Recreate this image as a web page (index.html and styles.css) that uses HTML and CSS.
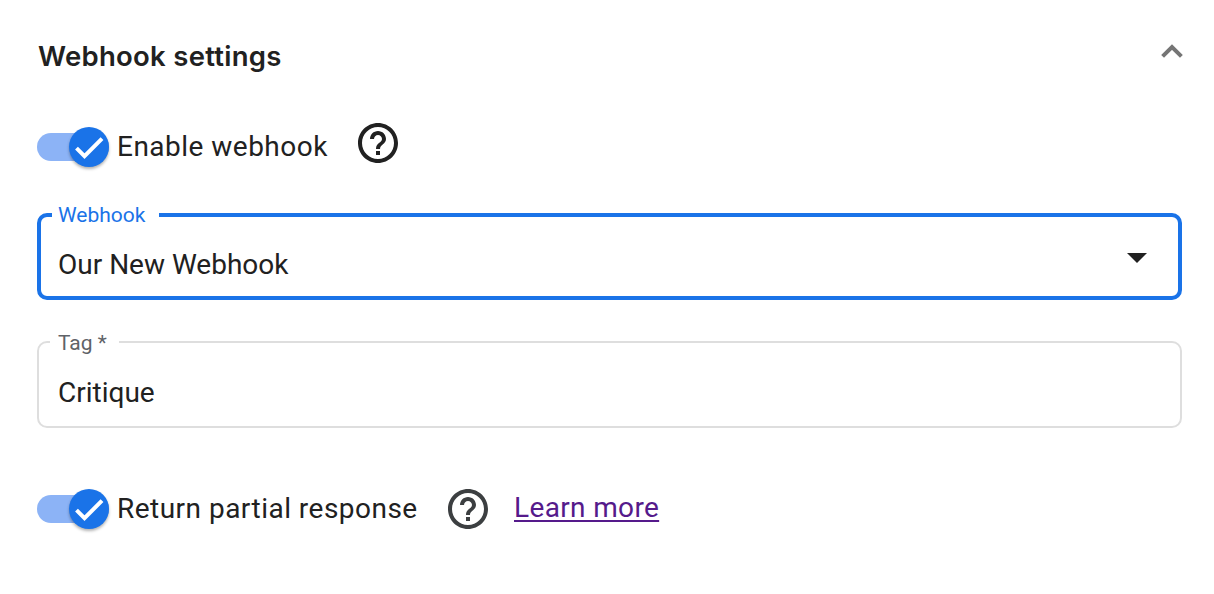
FILE: index.html
```html
<!DOCTYPE html>
<html lang="en">
<head>
<meta charset="utf-8">
<title>Webhook settings</title>
<link rel="stylesheet" href="styles.css">
</head>
<body>
<main class="panel">
  <header class="panel-header">
    <h2 class="title">Webhook settings</h2>
    <svg class="chevron" viewBox="0 0 22 14"><path d="M1.600 12.400 11 3l9.400 9.400"/></svg>
  </header>
  <div class="row row-enable">
    <span class="toggle"><span class="thumb"><svg viewBox="0 0 40 40"><path d="M7.5 21.200l8 8L33 11.600"/></svg></span></span>
    <span class="row-label enable-label">Enable webhook</span>
    <svg class="help help-dark" viewBox="1 1 22 22"><path d="M11 18h2v-2h-2v2zm1-16C6.480 2 2 6.480 2 12s4.480 10 10 10 10-4.480 10-10S17.520 2 12 2zm0 18c-4.410 0-8-3.590-8-8s3.590-8 8-8 8 3.590 8 8-3.590 8-8 8zm0-14c-2.210 0-4 1.790-4 4h2c0-1.100.9-2 2-2s2 .9 2 2c0 2-3 1.750-3 5h2c0-2.250 3-2.500 3-5 0-2.210-1.790-4-4-4z"/></svg>
  </div>
  <fieldset class="field field-active">
    <legend class="legend-webhook">Webhook</legend>
    <span class="value value-select">Our New Webhook</span>
    <svg class="caret" viewBox="0 0 20 10"><path d="M0 0h20L10 10z"/></svg>
  </fieldset>
  <fieldset class="field field-tag">
    <legend class="legend-tag">Tag *</legend>
    <span class="value value-tag">Critique</span>
  </fieldset>
  <div class="row row-return">
    <span class="toggle"><span class="thumb"><svg viewBox="0 0 40 40"><path d="M7.5 21.200l8 8L33 11.600"/></svg></span></span>
    <span class="row-label return-label">Return partial response</span>
    <svg class="help" viewBox="1 1 22 22"><path d="M11 18h2v-2h-2v2zm1-16C6.480 2 2 6.480 2 12s4.480 10 10 10 10-4.480 10-10S17.520 2 12 2zm0 18c-4.410 0-8-3.590-8-8s3.590-8 8-8 8 3.590 8 8-3.590 8-8 8zm0-14c-2.210 0-4 1.790-4 4h2c0-1.100.9-2 2-2s2 .9 2 2c0 2-3 1.750-3 5h2c0-2.250 3-2.500 3-5 0-2.210-1.790-4-4-4z"/></svg>
    <a class="learn" href="#">Learn more</a>
  </div>
</main>
</body>
</html>
```
FILE: styles.css
```css
* { box-sizing: border-box; }
body { margin: 0; background: #fff; font-family: Roboto, sans-serif; color: #212121; }
.panel { height: 594px; padding: 36px 31px 0 37px; overflow: hidden; }
.panel-header { display: flex; justify-content: space-between; height: 40px; padding-left: 1px; }
.title { margin: 0; font: 600 27.5px/40px Inter, Roboto, sans-serif; width: 250px; white-space: nowrap; letter-spacing: .28px; }
.chevron { width: 22px; height: 14px; margin-top: 8px; }
.chevron path { fill: none; stroke: #757575; stroke-width: 4; }
.row { display: flex; align-items: center; height: 40px; }
.row-enable { margin-top: 51px; }
.toggle { width: 72px; height: 28px; border-radius: 14px; background: #8cb3f6; display: flex; align-items: center; justify-content: flex-end; flex: none; }
.thumb { width: 40px; height: 40px; border-radius: 50%; background: #1a73e8; box-shadow: 0 2px 3px rgba(0,0,0,.3); flex: none; }
.thumb svg { display: block; width: 40px; height: 40px; }
.thumb path { fill: none; stroke: #fff; stroke-width: 4; }
.row-label { margin-left: 8px; font-size: 28px; line-height: 40px; letter-spacing: .48px; white-space: nowrap; flex: none; }
.enable-label { width: 239px; }
.return-label { width: 329px; }
.help { width: 44px; height: 44px; fill: #3c3f41; flex: none; }
.help-dark { fill: #212121; margin-top: -8px; }
.field { margin: 0; padding: 0; min-width: 0; width: 1145px; border-radius: 10px; display: flex; justify-content: space-between; }
.field legend { font-size: 21px; line-height: 24px; height: 24px; white-space: nowrap; }
.field-active { margin-top: 36px; height: 97px; border: 4px solid #1a73e8; }
.field .legend-webhook { color: #1a73e8; margin-left: 11px; padding: 0 6px; width: 107px; }
.value { font-size: 28px; line-height: 36px; white-space: nowrap; }
.value-select { padding: 20px 0 0 17px; }
.caret { width: 20px; height: 10px; margin: 26px 31px 0 0; fill: #212121; }
.field-tag { margin-top: 31px; height: 97px; border: 2px solid #dedede; }
.field .legend-tag { color: #5f6368; margin-left: 11px; padding: 0 8px; width: 69px; height: 22px; }
.value-tag { padding: 22px 0 0 19px; }
.row-return { margin-top: 61px; }
.learn { font-size: 28px; line-height: 40px; color: #551a8b; margin: -2px 0 0 24px; letter-spacing: .35px; text-decoration-thickness: 2px; text-underline-offset: 3px; }
```
